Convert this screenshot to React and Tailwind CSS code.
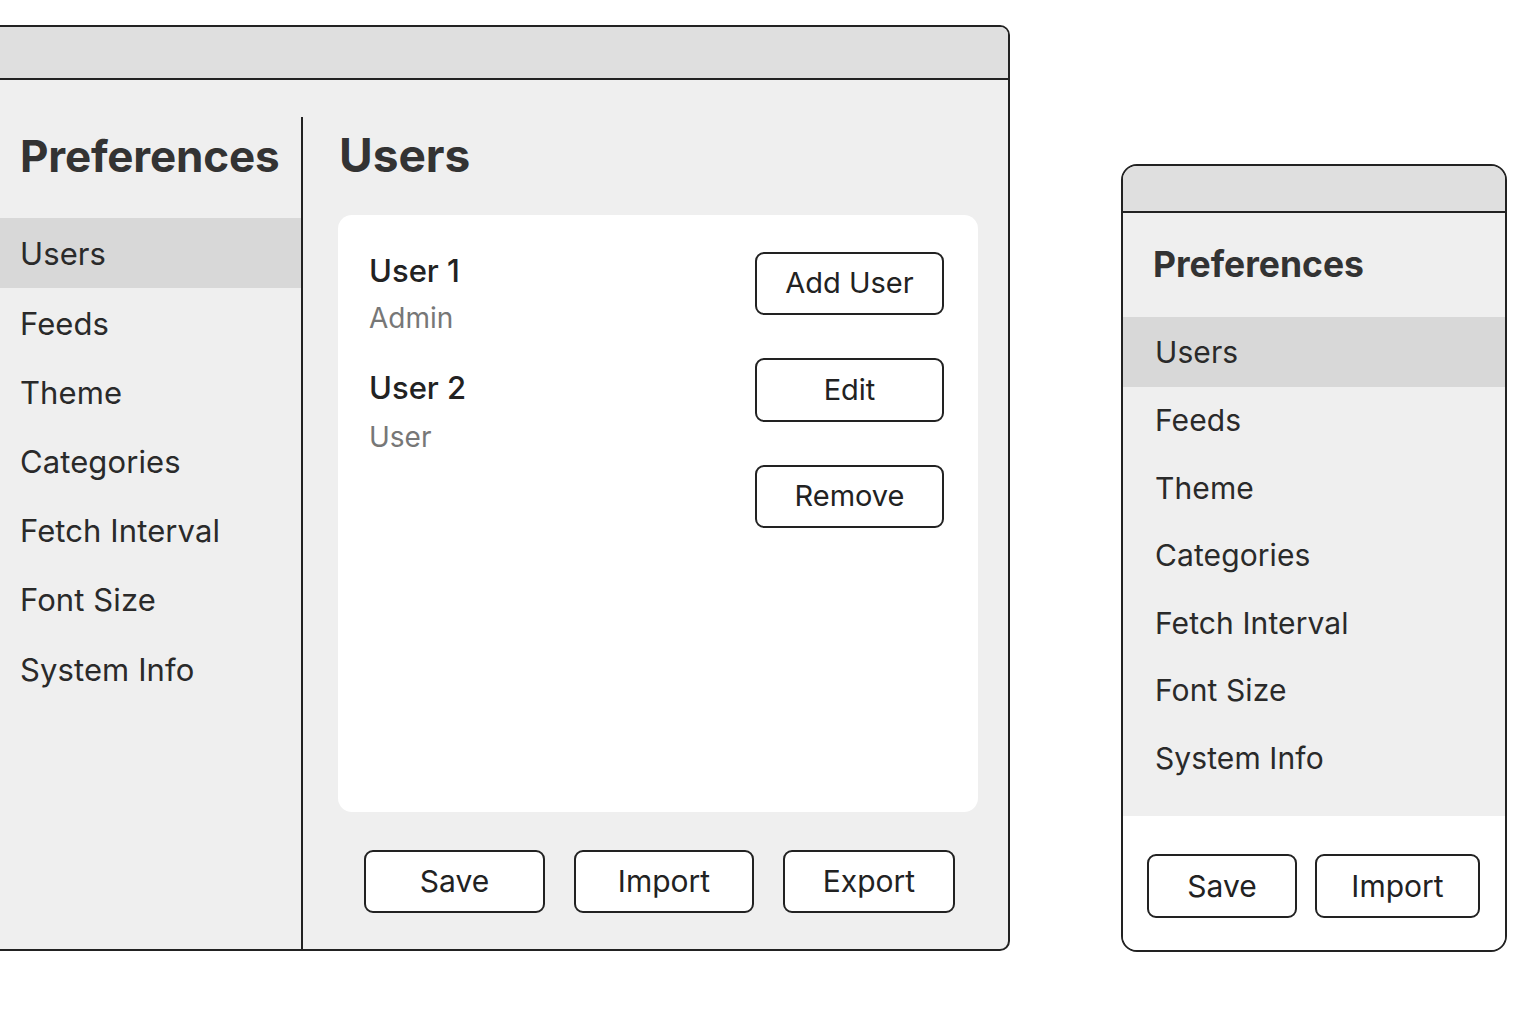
const NAV = ['Users', 'Feeds', 'Theme', 'Categories', 'Fetch Interval', 'Font Size', 'System Info']

function Btn({ children, className = '' }) {
  return (
    <button className={`flex items-center justify-center bg-white border-2 border-[#222] rounded-[9px] text-[#222] ${className}`}>
      {children}
    </button>
  )
}

function UserRow({ name, role, first }) {
  return (
    <div className={first ? '' : 'mt-[34px]'}>
      <div className="text-[31px] leading-[1.2] font-medium text-[#222]">{name}</div>
      <div className={`text-[28px] leading-[1.2] text-[#777] ${first ? 'mt-[13px]' : 'mt-[15px]'}`}>{role}</div>
    </div>
  )
}

export default function App() {
  return (
    <div className="w-[1536px] h-[1024px] bg-white overflow-hidden flex items-start" style={{ fontFamily: 'Inter, "Noto Sans", sans-serif' }}>
      {/* Desktop window */}
      <div className="-ml-[12px] mt-[25px] w-[1022px] h-[926px] shrink-0 border-2 border-[#222] rounded-r-[10px] bg-[#efefef] flex flex-col overflow-hidden">
        <div className="h-[53px] shrink-0 bg-[#dfdfdf] border-b-2 border-[#222]" />
        <div className="flex-1 flex pt-[37px]">
          <div className="w-[313px] shrink-0 border-r-2 border-[#222] pt-[13px]">
            <h1 className="pl-[30px] text-[44px] leading-[1.2] font-bold text-[#333] tracking-[-0.2px]">Preferences</h1>
            <div className="mt-[35px]">
              {NAV.map((item, i) => (
                <div key={item} className={`flex items-center pl-[30px] pt-[3px] text-[31px] tracking-[0.1px] text-[#2a2a2a] ${i === 0 ? 'h-[70px] bg-[#d8d8d8]' : 'h-[69.2px]'}`}>
                  {item}
                </div>
              ))}
            </div>
          </div>
          <div className="flex-1 flex flex-col pl-[35px] pr-[30px] pt-[10px]">
            <h2 className="pl-[1px] text-[46px] leading-[1.25] font-bold text-[#333]">Users</h2>
            <div className="mt-[30px] h-[597px] bg-white rounded-[14px] flex justify-between pt-[37px] pl-[31px] pr-[34px]">
              <div>
                <UserRow name="User 1" role="Admin" first />
                <UserRow name="User 2" role="User" />
              </div>
              <div className="flex flex-col gap-[43px]">
                <Btn className="w-[189px] h-[63px] text-[29px]">Add User</Btn>
                <Btn className="w-[189px] h-[64px] text-[29px]">Edit</Btn>
                <Btn className="w-[189px] h-[63px] text-[29px]">Remove</Btn>
              </div>
            </div>
            <div className="mt-[38px] pl-[26px] flex gap-[29px]">
              <Btn className="w-[181px] h-[63px] text-[30px]">Save</Btn>
              <Btn className="w-[180px] h-[63px] text-[30px]">Import</Btn>
              <Btn className="w-[172px] h-[63px] text-[30px]">Export</Btn>
            </div>
          </div>
        </div>
      </div>

      {/* Mobile window */}
      <div className="ml-[111px] mt-[164px] w-[386px] h-[788px] shrink-0 border-2 border-[#222] rounded-[16px] bg-white flex flex-col overflow-hidden">
        <div className="h-[47px] shrink-0 bg-[#dfdfdf] border-b-2 border-[#222]" />
        <div className="flex-1 bg-[#efefef] pt-[31px]">
          <h1 className="pl-[30px] text-[35.5px] leading-[1.2] font-bold text-[#333]">Preferences</h1>
          <div className="mt-[30px]">
            {NAV.map((item, i) => (
              <div key={item} className={`flex items-center pl-[32px] pt-[1px] text-[30px] tracking-[0.1px] text-[#2a2a2a] ${i === 0 ? 'h-[70px] bg-[#d8d8d8]' : 'h-[67.5px]'}`}>
                {item}
              </div>
            ))}
          </div>
        </div>
        <div className="h-[134px] shrink-0 bg-white pt-[38px] pl-[24px] flex items-start gap-[18px]">
          <Btn className="w-[150px] h-[64px] text-[30px]">Save</Btn>
          <Btn className="w-[165px] h-[64px] text-[30px]">Import</Btn>
        </div>
      </div>
    </div>
  )
}
